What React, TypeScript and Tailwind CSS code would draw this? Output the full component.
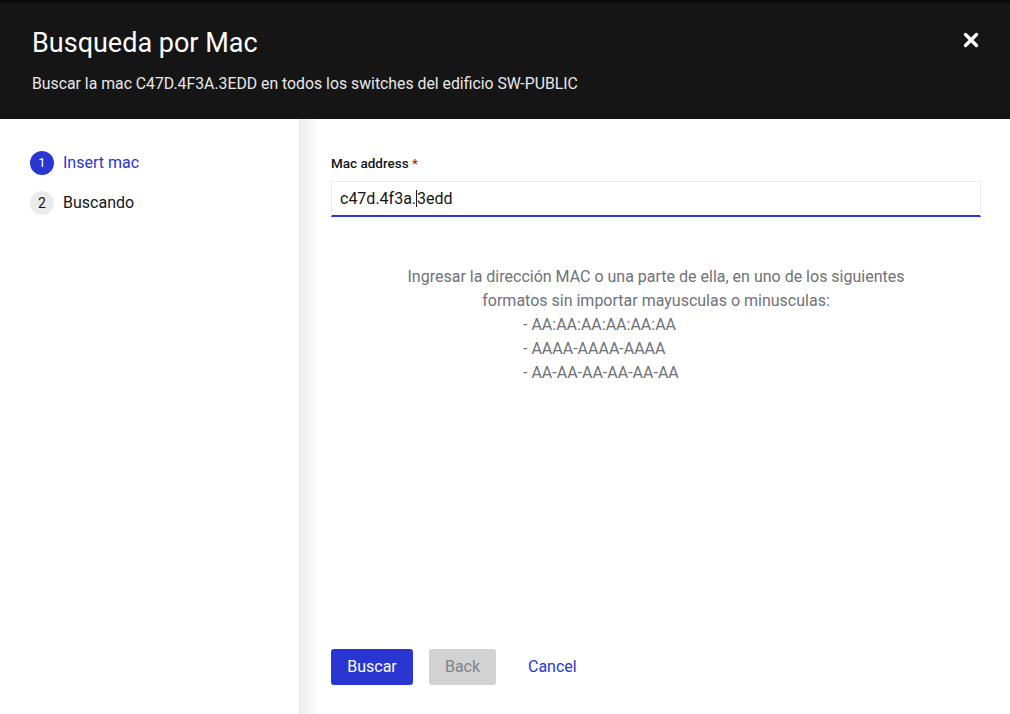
const blue = 'text-[#2936d2]'

function Step({ n, label, active }: { n: number; label: string; active?: boolean }) {
  return (
    <div className="flex h-[40px] items-center gap-[9px]">
      <span
        className={
          active
            ? 'flex h-[24px] w-[24px] items-center justify-center rounded-full bg-[#2936d2] text-[13px] text-white'
            : 'flex h-[24px] w-[24px] items-center justify-center rounded-full bg-[#ececec] text-[14px] text-[#151515]'
        }
      >
        {n}
      </span>
      <span className={active ? `text-[16px] ${blue}` : 'text-[16px] text-[#151515]'}>{label}</span>
    </div>
  )
}

export default function App() {
  return (
    <div className="flex h-[714px] w-[1010px] flex-col overflow-hidden bg-white font-['Roboto',sans-serif]">
      <div className="h-[3px] bg-[#0c0c0c]" />
      <header className="relative h-[116px] bg-[#151515] pl-[32px] pt-[22px]">
        <h1 className="text-[27px] leading-[36px] text-white">Busqueda por Mac</h1>
        <p className="mt-[13px] text-[15.8px] leading-[20px] text-[#e8e8e8]">
          Buscar la mac C47D.4F3A.3EDD en todos los switches del edificio SW-PUBLIC
        </p>
        <button className="absolute right-[31px] top-[29px] text-white">
          <svg width="16" height="16" viewBox="0 0 16 16">
            <path d="M2.5 2.5 L13.5 13.5 M13.5 2.5 L2.5 13.5" stroke="white" strokeWidth="3.4" strokeLinecap="round" />
          </svg>
        </button>
      </header>

      <div className="flex flex-1">
        <aside className="w-[299px] shrink-0 pl-[30px] pt-[24px]">
          <Step n={1} label="Insert mac" active />
          <Step n={2} label="Buscando" />
        </aside>
        <div className="w-[22px] shrink-0 bg-gradient-to-r from-[#ececec] to-white" />

        <main className="flex flex-1 flex-col pl-[10px] pr-[29px] pt-[34px] pb-[29px]">
          <label className="text-[13.5px] font-medium text-[#151515]">
            Mac address <span className="text-[#c9190b]">*</span>
          </label>
          <div className="mt-[8px] flex h-[36px] items-center border border-[#ededed] border-b-2 border-b-[#2936d2] pl-[8px] text-[16px] text-[#151515]">
            c47d.4f3a.<span className="inline-block h-[17px] w-px bg-[#151515]" />3edd
          </div>

          <div className="mt-[48px] text-center text-[16px] leading-[24px] text-[#6f7276]">
            <p>Ingresar la dirección MAC o una parte de ella, en uno de los siguientes</p>
            <p>formatos sin importar mayusculas o minusculas:</p>
          </div>
          <div className="pl-[192px] text-[16px] leading-[24px] text-[#6f7276]">
            <p>- AA:AA:AA:AA:AA:AA</p>
            <p>- AAAA-AAAA-AAAA</p>
            <p>- AA-AA-AA-AA-AA-AA</p>
          </div>

          <div className="mt-auto flex items-center">
            <button className="h-[36px] w-[82px] rounded-[3px] bg-[#2936d2] text-[16px] text-white">Buscar</button>
            <button className="ml-[16px] h-[36px] w-[67px] rounded-[3px] bg-[#d2d2d2] text-[16px] text-[#808387]">Back</button>
            <button className={`ml-[16px] h-[36px] px-[16px] text-[16px] ${blue}`}>Cancel</button>
          </div>
        </main>
      </div>
    </div>
  )
}
